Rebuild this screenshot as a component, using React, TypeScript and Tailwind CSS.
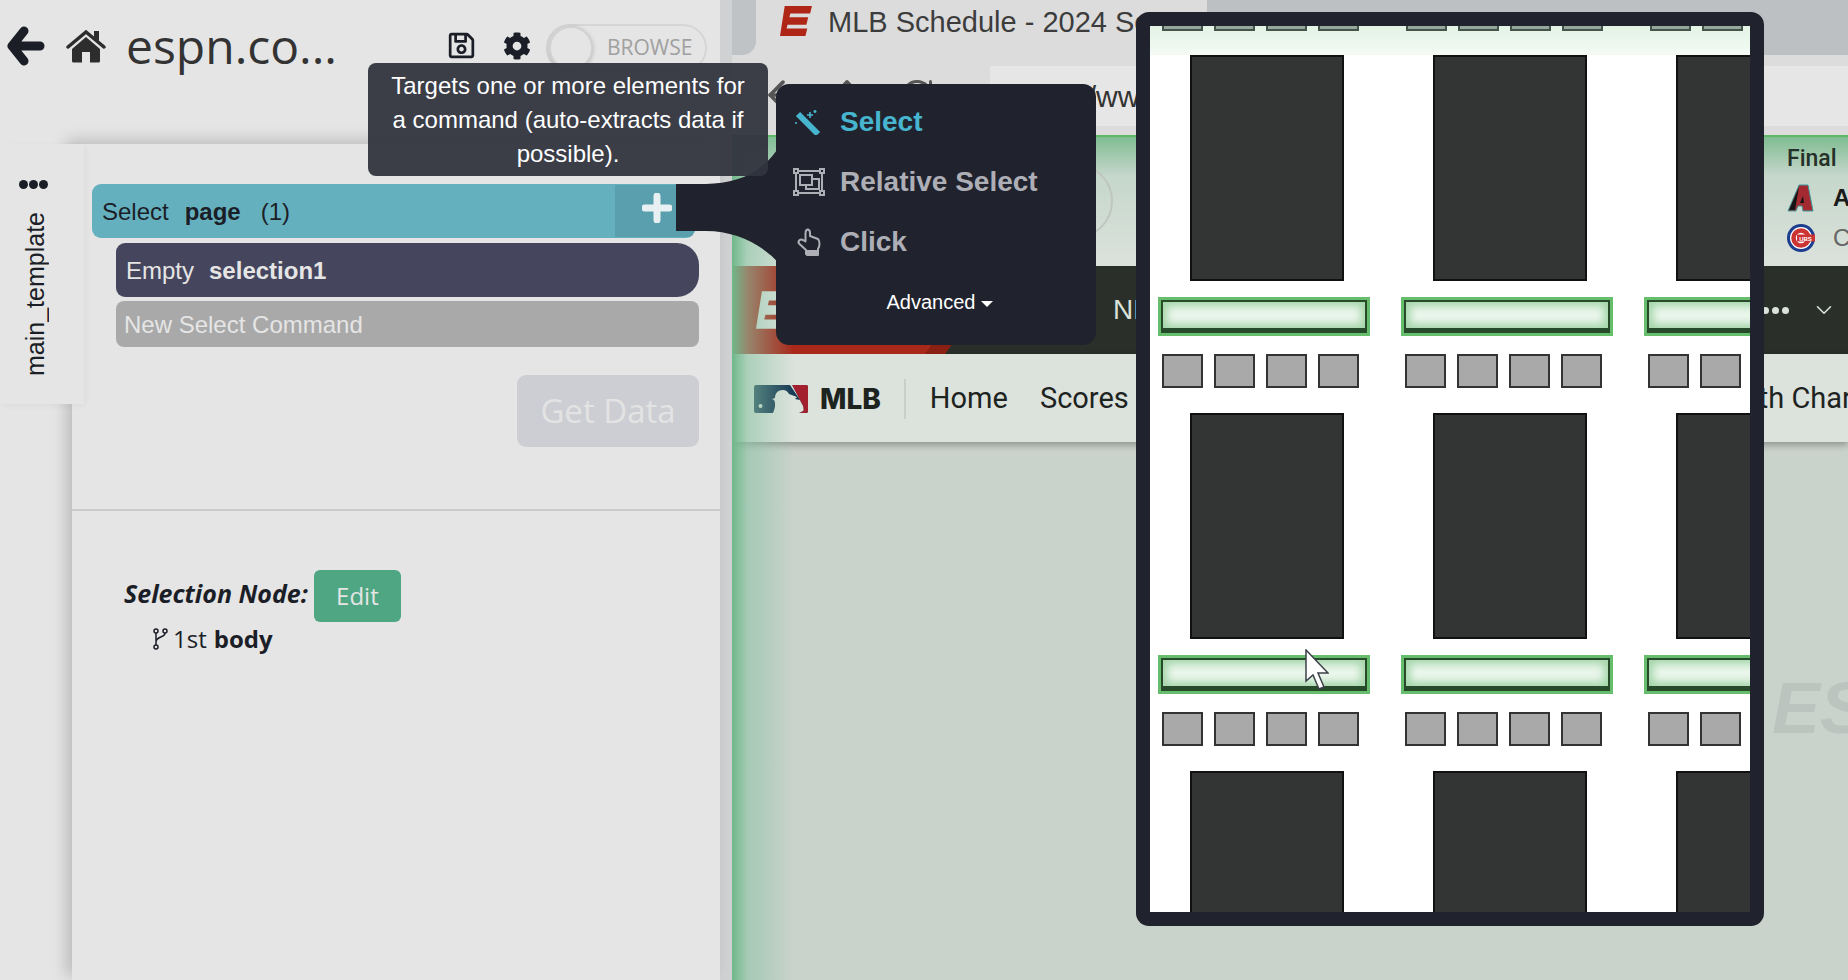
import { ArrowLeft, ArrowRight, ChevronDown, Plus, RotateCw } from "lucide-react";
import { FaCog, FaRegSave } from "react-icons/fa";

const columns = [
  { id: "a", squares: 4 },
  { id: "b", squares: 4 },
  { id: "c", squares: 2 },
];

function LeftPanel() {
  return (
    <div className="flex h-full w-[732px] shrink-0 flex-col border-r-[12px] border-[#d0d1d3] bg-[#e5e5e5]">
      {/* Header */}
      <div className="flex h-[144px] shrink-0 items-start">
        <svg viewBox="0 0 38 40" className="ml-[7px] mt-[26px] h-[40px] w-[38px]" fill="none" stroke="#1b1e27" strokeWidth="9" strokeLinecap="round" strokeLinejoin="round">
          <path d="M17 5L5 20l12 15M5 20h28" />
        </svg>
        <svg viewBox="0 0 40 34" className="ml-[21px] mt-[29px] h-[34px] w-[40px]">
          <path d="M2 18L20 3l18 15" fill="none" stroke="#2d2d2d" strokeWidth="3.500" strokeLinecap="round" />
          <path d="M28 2h5v10l-5-4z" fill="#2d2d2d" />
          <path d="M20 8L6 20v12a1.500 1.500 0 0 0 1.500 1.500H16V23h8v10.500h8.500A1.500 1.500 0 0 0 34 32V20z" fill="#2d2d2d" />
        </svg>
        <span className="ml-[20px] mt-[16px] font-['Open_Sans'] text-[48px] leading-[60px] text-[#333]">espn.co...</span>
        <FaRegSave className="ml-[110px] mt-[31px] h-[29px] w-[29px] text-[#1b1e27]" />
        <FaCog className="ml-[27px] mt-[32px] h-[28px] w-[28px] text-[#1b1e27]" />
        <div className="ml-[15px] mt-[24px] flex h-[48px] w-[161px] items-center rounded-full border-2 border-[#d6d6d6]">
          <span className="ml-[1px] h-[44px] w-[44px] rounded-full border-2 border-[#d2d2d2] bg-[#e5e5e5] shadow-[0_1px_4px_rgba(0,0,0,.2)]" />
          <span className="ml-[14px] font-['Open_Sans'] text-[21px] text-[#a0a0a0]">BROWSE</span>
        </div>
      </div>

      <div className="flex flex-1">
        {/* Template tab */}
        <div className="relative z-10 flex h-[260px] w-[84px] shrink-0 flex-col items-center rounded-tl-[12px] bg-[#e5e5e5] pt-[36px] shadow-[2px_2px_6px_rgba(0,0,0,.04)]">
          <div className="mr-[18px] flex gap-[1px]">
            <span className="h-[9px] w-[9px] rounded-full bg-[#1b1e27]" />
            <span className="h-[9px] w-[9px] rounded-full bg-[#1b1e27]" />
            <span className="h-[9px] w-[9px] rounded-full bg-[#1b1e27]" />
          </div>
          <span className="mr-[15px] mt-[23px] rotate-180 text-[25px] leading-[30px] text-[#1b1e27] [writing-mode:vertical-rl]">main_template</span>
        </div>

        {/* Main column */}
        <div className="-ml-[12px] flex flex-1 flex-col bg-[#e5e5e5] pt-[40px] shadow-[-6px_-4px_14px_rgba(0,0,0,.18)]">
          <div className="ml-[20px] mr-[25px] flex h-[54px] items-center overflow-hidden rounded-[9px] bg-[#65b0bf] pt-[1px] text-[24px] text-[#1b1e27]">
            <span className="ml-[10px]">Select</span>
            <b className="ml-[16px]">page</b>
            <span className="ml-[20px]">(1)</span>
            <div className="ml-auto flex h-[52px] w-[80px] self-start bg-[#5a9fad] pl-[27px] pt-[8px]">
              <svg viewBox="0 0 30 30" className="h-[30px] w-[30px]">
                <path d="M15 3v24M3 15h24" stroke="#e9f0f2" strokeWidth="7" strokeLinecap="round" />
              </svg>
            </div>
          </div>
          <div className="ml-[44px] mr-[21px] mt-[5px] flex h-[54px] items-center rounded-l-[9px] rounded-r-[22px] bg-[#45465d] pt-[1px] text-[24px] text-[#e5e5e5]">
            <span className="ml-[10px]">Empty</span>
            <b className="ml-[15px]">selection1</b>
          </div>
          <div className="ml-[44px] mr-[21px] mt-[4px] flex h-[46px] items-center rounded-[8px] bg-[#a9a9a9] pl-[8px] pt-[1px] text-[24px] text-[#e5e5e5]">
            New Select Command
          </div>
          <div className="mr-[21px] mt-[28px] flex h-[72px] w-[182px] items-center justify-center self-end rounded-[9px] bg-[#cdced3] font-['Open_Sans'] text-[33px] text-[#e3e3e3]">
            Get Data
          </div>
          <div className="mt-[62px] h-[2px] bg-[#cbcbcb]" />
          <div className="ml-[52px] mt-[59px] flex items-center font-['Open_Sans'] text-[24px] text-[#1b1e27]">
            <b className="mb-[5px] text-[25px] italic">Selection Node:</b>
            <span className="ml-[6px] flex h-[52px] w-[87px] items-center justify-center rounded-[6px] bg-[#4fa683] text-[#e5e5e5]">Edit</span>
          </div>
          <div className="ml-[80px] -mt-[1px] flex items-center font-['Open_Sans'] text-[24px] text-[#1b1e27]">
            <svg viewBox="0 0 16 24" className="h-[24px] w-[16px]" fill="none" stroke="#1b1e27" strokeWidth="1.500">
              <circle cx="4" cy="4" r="2" />
              <circle cx="4" cy="20" r="2" />
              <circle cx="13" cy="4" r="2" />
              <path d="M4 6v12M13 6c0 5-9 3-9 9" />
            </svg>
            <span className="ml-[5px]">1st</span>
            <b className="ml-[7px]">body</b>
          </div>
        </div>
      </div>
    </div>
  );
}

function EspnMark({ fill, className }: { fill: string; className: string }) {
  return (
    <svg viewBox="0 0 34 34" className={className}>
      <path d="M5 1h29l-2 8H11l-1 4h20l-2 8H8l-1 4h22l-2 8H0z" fill={fill} />
    </svg>
  );
}

function Browser() {
  return (
    <div className="relative flex h-full w-[1116px] shrink-0 flex-col overflow-hidden bg-[#cad2cc]">
      {/* Tab strip */}
      <div className="flex h-[55px] shrink-0 bg-[#dcdcdc]">
        <div className="h-full w-[24px] rounded-br-[14px] bg-[#bfc3c6]" />
        <div className="flex w-[451px] items-start pl-[24px] pt-[5px]">
          <EspnMark fill="#b02616" className="h-[32px] w-[32px] shrink-0" />
          <span className="ml-[16px] whitespace-nowrap text-[29px] leading-[34px] text-[#3c3c3c]">MLB Schedule - 2024 Season</span>
        </div>
        <div className="flex-1 overflow-hidden bg-[#bdc0c3] pl-[53px] pt-[7px]">
          <Plus size={28} className="text-[#444]" strokeWidth={1.5} />
        </div>
      </div>

      {/* Toolbar */}
      <div className="flex h-[80px] shrink-0 bg-[#dcdcdc]">
        <div className="flex w-[258px] shrink-0 items-center pl-[29px] text-[#555]">
          <ArrowLeft size={44} />
          <ArrowRight size={44} className="ml-[20px] -rotate-90" />
          <RotateCw size={36} className="ml-[30px]" />
        </div>
        <div className="mt-[11px] flex h-[60px] flex-1 items-center bg-[#e6e6e6] pl-[16px] text-[30px] text-[#333]">https://www.espn.com/mlb/schedule</div>
      </div>

      {/* Score strip */}
      <div className="flex h-[131px] shrink-0 border-t-2 border-[#5fb865] bg-gradient-to-b from-[#7fbc92] via-[#c6d7cb] via-30% to-[#dbe2dc]">
        <div className="ml-[305px] mt-[26px] h-[76px] w-[76px] shrink-0 rounded-full border-2 border-[#bfc6c1]" />
        <div className="ml-auto w-[61px] shrink-0 pt-[8px]">
          <div className="font-['Roboto'] text-[23px] font-medium leading-[28px] text-[#253028]">Final</div>
          <div className="mt-[11px] flex h-[28px] items-center">
            <svg viewBox="0 0 28 28" className="h-[28px] w-[28px] shrink-0">
              <path d="M12 1h9l5 26H16l-1-5h-4l-2 5H1z" fill="#a32a30" stroke="#3f9a9c" strokeWidth="1" />
              <path d="M12 3L2 26h6z" fill="#151515" />
              <path d="M16 12l1 7h-4z" fill="#151515" />
            </svg>
            <span className="ml-[18px] text-[24px] font-bold text-[#1a1a1a]">A</span>
          </div>
          <div className="mt-[12px] flex h-[28px] items-center">
            <svg viewBox="0 0 28 28" className="h-[28px] w-[28px] shrink-0">
              <circle cx="14" cy="14" r="14" fill="#1d3d8f" />
              <circle cx="14" cy="14" r="11" fill="#fff" />
              <circle cx="14" cy="14" r="7.500" fill="none" stroke="#cc3433" strokeWidth="4.500" />
              <rect x="10" y="10.500" width="18" height="7" fill="#cc3433" />
              <text x="18.500" y="16.500" fontSize="6" fontWeight="700" textAnchor="middle" fill="#fff">UBS</text>
            </svg>
            <span className="ml-[18px] text-[24px] text-[#666]">C</span>
          </div>
        </div>
      </div>

      {/* ESPN nav */}
      <div className="flex h-[88px] shrink-0 items-center bg-[#2a2f29]">
        <div className="h-full w-[275px] shrink-0 bg-[#8a2014] [clip-path:polygon(0_0,100%_0,77.500%_100%,0_100%)]">
          <div className="flex h-full w-[255px] items-center bg-[#a8281a] pl-[20px] [clip-path:polygon(0_0,100%_0,75.700%_100%,0_100%)]">
            <EspnMark fill="#dbe2dc" className="h-[40px] w-[48px]" />
          </div>
        </div>
        <span className="ml-[106px] text-[28px] text-[#dbe2dc]">NFL</span>
        <div className="ml-auto mr-[22px] flex gap-[3px]">
          <span className="h-[7px] w-[7px] rounded-full bg-[#dbe2dc]" />
          <span className="h-[7px] w-[7px] rounded-full bg-[#dbe2dc]" />
          <span className="h-[7px] w-[7px] rounded-full bg-[#dbe2dc]" />
        </div>
        <ChevronDown size={26} className="mr-[11px] text-[#dbe2dc]" strokeWidth={1.5} />
      </div>

      {/* MLB nav */}
      <div className="flex h-[88px] shrink-0 items-center bg-[#dce2dc] pt-[1px] font-['Roboto'] text-[#1d231f] shadow-[0_3px_7px_rgba(0,0,0,.3)]">
        <svg viewBox="0 0 54 28" className="ml-[22px] h-[28px] w-[54px] shrink-0">
          <rect width="54" height="28" rx="2" fill="#173a55" />
          <path d="M38 0h14a2 2 0 0 1 2 2v24a2 2 0 0 1-2 2h-7l4-2c1-1 .5-3 0-5z" fill="#a3202f" />
          <path d="M36 0h2l11 21c.5 2 1 5 0 5l-4 2H19c2-5 3-9 1-13l-2-1 3-1c0-5 3-8 8-8 3 0 4 1 6 4l8 3-2 2 5 1z" fill="#dce2dc" />
          <circle cx="6.500" cy="21" r="2" fill="#dce2dc" />
        </svg>
        <b className="ml-[12px] font-['Inter'] text-[28px] font-extrabold">MLB</b>
        <span className="ml-[23px] h-[40px] w-[2px] bg-[#c8cfc9]" />
        <span className="ml-[24px] text-[29px]">Home</span>
        <span className="ml-[32px] text-[29px]">Scores</span>
        <span className="ml-auto mr-[-29px] whitespace-nowrap text-[29px]">Depth Charts</span>
      </div>

      <div className="flex-1 pl-[1040px] pt-[238px]">
        <span className="whitespace-nowrap text-[72px] font-bold italic leading-[56px] text-[#bcc4bf]">ESPN</span>
      </div>

      {/* Green glow on the left edge */}
      <div className="absolute bottom-0 left-0 top-[137px] w-[62px] bg-gradient-to-r from-[#6fb88a] via-[#8cc4a4]/60 via-25% to-transparent" />
    </div>
  );
}

function Tile({ squares }: { squares: number }) {
  return (
    <div className="w-[212px] shrink-0">
      <div className="ml-[32px] h-[226px] w-[154px] border-2 border-[#111] bg-[#333534]" />
      <div className="mt-[16px] h-[39px] border-[3px] border-[#66bd6c]">
        <div className="h-full border-2 border-b-[5px] border-[#274a2a] bg-[#ecf7ed] shadow-[inset_0_0_8px_4px_rgba(90,180,100,.5)]" />
      </div>
      <div className="ml-[4px] mt-[18px] flex gap-[11px]">
        {Array.from({ length: squares }).map((_, i) => (
          <div key={i} className="h-[34px] w-[41px] shrink-0 border-2 border-[#333] bg-[#a9a9a9]" />
        ))}
      </div>
    </div>
  );
}

function Minimap() {
  return (
    <div className="absolute left-[1136px] top-[12px] z-40 h-[914px] w-[628px] rounded-[13px] bg-[#20232d] p-[14px]">
      <div className="relative h-full w-full overflow-hidden bg-white">
        <div className="h-[29px] bg-gradient-to-b from-[#e2f3e4] to-[#f4fbf5] pl-[12px]">
          <div className="flex gap-[11px]">
            {[0, 1, 2, 3].map((i) => (
              <div key={i} className="h-[5px] w-[41px] border-x-2 border-b-2 border-[#44544a] bg-[#93a89b]" />
            ))}
            <div className="ml-[-11px] w-[36px] shrink-0" />
            {[0, 1, 2, 3].map((i) => (
              <div key={i} className="h-[5px] w-[41px] border-x-2 border-b-2 border-[#44544a] bg-[#93a89b]" />
            ))}
            <div className="ml-[-11px] w-[36px] shrink-0" />
            {[0, 1].map((i) => (
              <div key={i} className="h-[5px] w-[41px] border-x-2 border-b-2 border-[#44544a] bg-[#93a89b]" />
            ))}
          </div>
        </div>
        {[0, 1, 2].map((row) => (
          <div key={row} className="mb-[25px] ml-[8px] flex gap-[31px]">
            {columns.map((c) => (
              <Tile key={c.id} squares={c.squares} />
            ))}
          </div>
        ))}
        {/* Mouse pointer */}
        <svg viewBox="0 0 24 42" className="absolute left-[155px] top-[623px] h-[42px] w-[24px]">
          <path d="M1 1v31l7-6 6 14 5-2-6-14h10z" fill="#fff" stroke="#3c4048" strokeWidth="1.500" />
        </svg>
      </div>
    </div>
  );
}

function CommandMenu() {
  return (
    <>
      {/* Connector from the plus button to the menu */}
      <svg viewBox="0 0 110 120" className="absolute left-[676px] top-[145px] z-20 h-[120px] w-[110px]">
        <path d="M0 39h30C60 39 88 28 104 0v120C88 100 60 86 30 86H0z" fill="#20232d" />
      </svg>
      <div className="absolute left-[368px] top-[63px] z-30 w-[400px] rounded-[8px] bg-[#32343e]/95 px-[20px] pb-[5px] pt-[6px] text-center text-[24px] leading-[34px] text-white">
        Targets one or more elements for a command (auto-extracts data if possible).
      </div>
      <div className="absolute left-[776px] top-[84px] z-30 h-[261px] w-[320px] rounded-[13px] bg-[#20232d] pt-[8px] text-[28px] font-bold text-[#aeafb6]">
        <div className="flex h-[60px] items-center text-[#47b5cf]">
          <svg viewBox="0 0 26 26" className="ml-[19px] h-[26px] w-[26px]" fill="none" stroke="#47b5cf">
            <path d="M3 5l20 20" strokeWidth="6" />
            <path d="M15 3v6M12 6h6M20 1v3M18.500 2.500h3M1 13v2" strokeWidth="1.600" />
          </svg>
          <span className="ml-[19px]">Select</span>
        </div>
        <div className="flex h-[60px] items-center">
          <svg viewBox="0 0 32 28" className="ml-[17px] h-[28px] w-[32px]" fill="none" stroke="#aeafb6" strokeWidth="2">
            <rect x="3" y="3" width="26" height="22" />
            <rect x="1" y="1" width="4" height="4" fill="#20232d" />
            <rect x="27" y="1" width="4" height="4" fill="#20232d" />
            <rect x="1" y="23" width="4" height="4" fill="#20232d" />
            <rect x="27" y="23" width="4" height="4" fill="#20232d" />
            <rect x="7" y="7" width="12" height="10" />
            <path d="M19 11h7v10H13v-4" />
          </svg>
          <span className="ml-[15px]">Relative Select</span>
        </div>
        <div className="flex h-[60px] items-center">
          <svg viewBox="0 0 26 28" className="ml-[20px] h-[28px] w-[26px]" fill="none" stroke="#aeafb6" strokeWidth="2" strokeLinejoin="round">
            <path d="M12 1.500c-2 0-2.500 2-2.500 4v8l-2.500-1.500c-3-1.500-6 1.500-3.500 4l6.500 6v4h12v-5c2-3 2-8 0-10l-8-3V5c0-2-1-3.500-2.500-3.500z" />
            <rect x="11" y="23" width="11" height="4" fill="#aeafb6" />
          </svg>
          <span className="ml-[18px]">Click</span>
        </div>
        <div className="flex h-[60px] items-center justify-center pl-[8px] text-[20px] font-normal text-white">
          Advanced
          <span className="ml-[6px] mt-[4px] h-0 w-0 border-x-[6px] border-t-[6px] border-x-transparent border-t-white" />
        </div>
      </div>
    </>
  );
}

export default function App() {
  return (
    <div className="relative flex h-[980px] w-[1848px] overflow-hidden font-['Liberation_Sans',sans-serif]">
      <LeftPanel />
      <Browser />
      <CommandMenu />
      <Minimap />
    </div>
  );
}
